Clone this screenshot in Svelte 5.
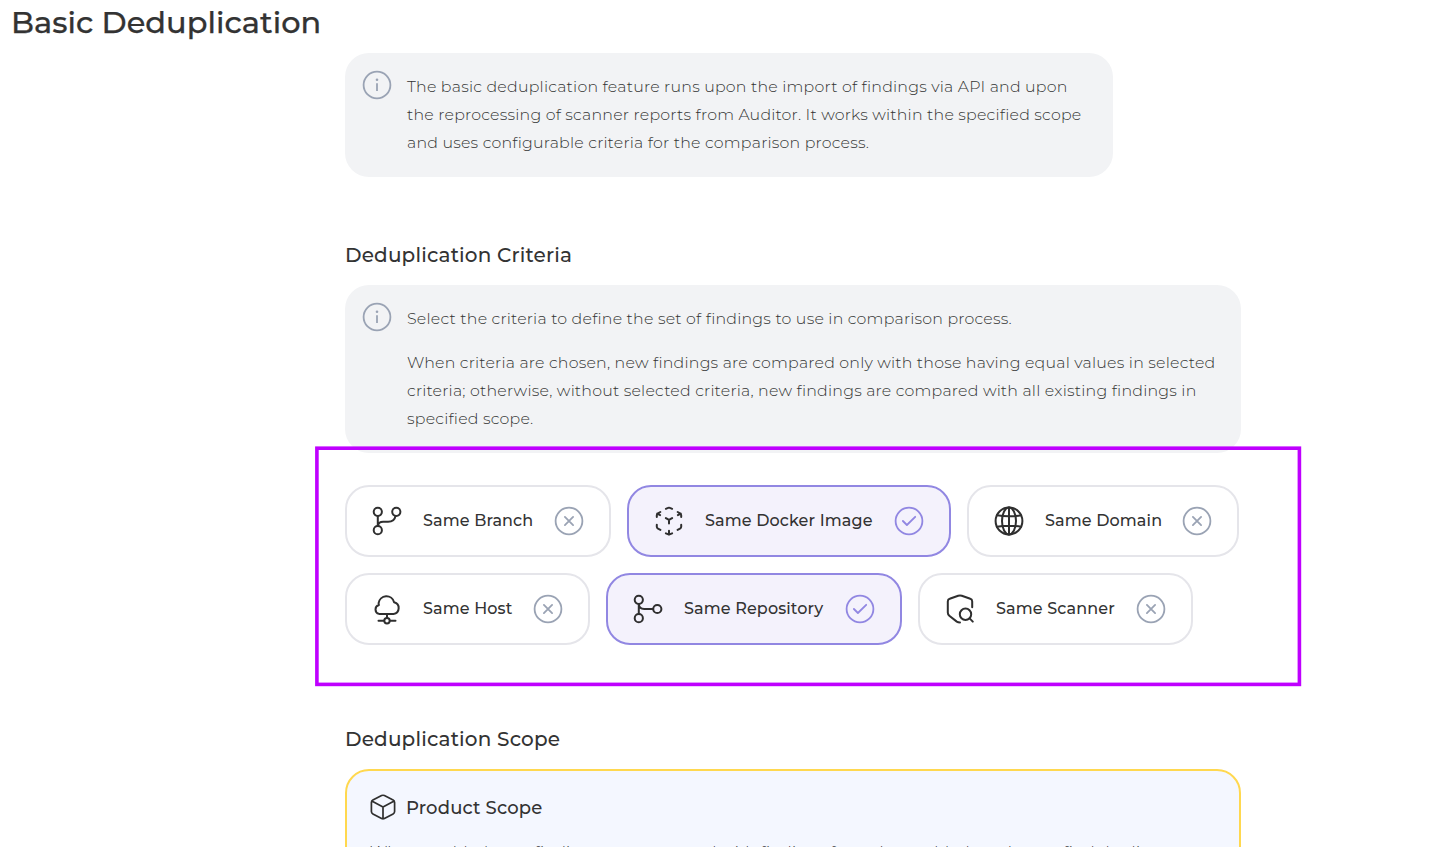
<script>
  const intro = [
    'The basic deduplication feature runs upon the import of findings via API and upon the reprocessing of scanner reports from Auditor. It works within the specified scope and uses configurable criteria for the comparison process.',
  ];

  const criteriaHelp = [
    'Select the criteria to define the set of findings to use in comparison process.',
    'When criteria are chosen, new findings are compared only with those having equal values in selected criteria; otherwise, without selected criteria, new findings are compared with all existing findings in specified scope.',
  ];

  const rows = [
    [
      { label: 'Same Branch', icon: 'branch', width: 266, on: false },
      { label: 'Same Docker Image', icon: 'docker', width: 324, on: true },
      { label: 'Same Domain', icon: 'globe', width: 272, on: false },
    ],
    [
      { label: 'Same Host', icon: 'cloud', width: 245, on: false },
      { label: 'Same Repository', icon: 'repo', width: 296, on: true },
      { label: 'Same Scanner', icon: 'scanner', width: 275, on: false },
    ],
  ];
</script>

{#snippet note(paragraphs, narrow)}
  <section class="note" class:narrow>
    <svg class="info" viewBox="0 0 32 32" width="32" height="32">
      <circle cx="16" cy="16" r="13.4" />
      <path d="M16 14.2v7.8" />
      <circle class="dot" cx="16" cy="10.7" r="1.3" />
    </svg>
    <div class="copy">
      {#each paragraphs as paragraph}
        <p>{paragraph}</p>
      {/each}
    </div>
  </section>
{/snippet}

{#snippet icon(name)}
  <svg class="icon" viewBox="0 0 32 32" width="32" height="32">
    {#if name === 'branch'}
      <circle cx="6.8" cy="6.8" r="4.1" />
      <circle cx="25.3" cy="6.8" r="4.1" />
      <circle cx="6.8" cy="25.2" r="4.1" />
      <path d="M6.8 10.9v10.2c.4-2.8 2.4-4.3 5.4-4.3h4.9c4 0 6.8-2.2 7.4-5.9" />
    {:else if name === 'docker'}
      <path d="M12.9 3.8 15 2.9q1-.5 2 0L19.1 3.8M7.3 7 5 8.3Q3.8 9 3.8 10.2V11.9M4.2 8.6l2.9 1.5M24.7 7 27 8.3q1.2.7 1.2 1.9v1.7M27.8 8.6l-2.9 1.5M3.8 19.8v2q0 1.2 1.2 1.9l2.4 1.2M28.2 19.8v2q0 1.200-1.200 1.900l-2.400 1.200M12.900 28.400 16 29.700l3.100-1.300M16 25.700v3.800M12.900 13.100 16 14.900l3.100-1.800M16 14.900v3.600" />
    {:else if name === 'globe'}
      <circle cx="16" cy="16" r="13.4" />
      <ellipse cx="16" cy="16" rx="7" ry="13.4" />
      <path d="M16 2.6v26.8M3.9 10.2Q16 12.4 28.1 10.2M3.9 21.8Q16 19.6 28.1 21.8" />
    {:else if name === 'cloud'}
      <path d="M8 20.9H22.5a5.900 5.900 0 0 0 .6-11.600A7.900 7.900 0 0 0 7.600 10.200 8 8 0 0 0 7.900 12 4.600 4.600 0 0 0 8 20.900Z" />
      <path d="M16 20.9v4.1M7.5 27.8h5.500M19 27.8h5.500" />
      <circle cx="16" cy="27.8" r="2.7" />
    {:else if name === 'repo'}
      <circle cx="6.8" cy="6.8" r="4.1" />
      <circle cx="6.8" cy="25.2" r="4.1" />
      <circle cx="25.3" cy="16" r="4.1" />
      <path d="M6.8 10.9v10.2M6.8 11c.2 3.4 2.2 5 5.4 5h9" />
    {:else}
      <path d="M28.2 14.2V8.4q0-2-1.9-2.6l-8.5-3q-1.8-.6-3.6 0l-8.5 3Q3.8 6.4 3.8 8.4V19.5q0 2 1.5 3.2l7.5 5.9q1.3.9 3.2.9" />
      <circle cx="21.5" cy="21.3" r="5.7" />
      <path d="m25.6 25.4 3.2 3.2" />
    {/if}
  </svg>
{/snippet}

<main>
  <h1>Basic Deduplication</h1>

  <div class="content">
    {@render note(intro, true)}

    <h2 class="criteria-title">Deduplication Criteria</h2>
    {@render note(criteriaHelp, false)}

    <div class="criteria">
      {#each rows as row}
        <div class="row">
          {#each row as chip}
            <button class="chip" class:on={chip.on} style="width: {chip.width}px">
              {@render icon(chip.icon)}
              <span class="label">{chip.label}</span>
              <svg class="state" viewBox="0 0 32 32" width="32" height="32">
                <circle cx="16" cy="16" r="13.4" />
                {#if chip.on}
                  <path d="m9.9 16 4 4 8.3-8.2" />
                {:else}
                  <path d="m11.9 11.9 8.2 8.2M20.1 11.9l-8.2 8.2" />
                {/if}
              </svg>
            </button>
          {/each}
        </div>
      {/each}
      <svg class="frame" viewBox="0 0 988 242" width="988" height="242">
        <rect x="1.9" y="2.2" width="982.5" height="236.2" />
      </svg>
    </div>

    <h2 class="scope-title">Deduplication Scope</h2>
    <section class="scope">
      <h3>
        <svg class="cube" viewBox="0 0 26 26" width="26" height="26">
          <path d="M11.6 1.6q1.4-.7 2.8 0l8.7 4.5q1.5.8 1.5 2.4v9q0 1.6-1.5 2.4l-8.7 4.5q-1.4.7-2.8 0l-8.7-4.5q-1.5-.8-1.5-2.4v-9q0-1.6 1.5-2.4ZM1.8 7 13 13l11.2-6M13 13v11.8" />
        </svg>
        <span>Product Scope</span>
      </h3>
      <p>When enabled, new findings are compared with findings from the enabled product to find duplicates</p>
    </section>
  </div>
</main>

<style>
  :global(body) {
    overflow: hidden;
    background: #fff;
  }

  main {
    box-sizing: border-box;
    height: 847px;
    overflow: hidden;
    color: #333;
    font-family: Montserrat, Inter, sans-serif;
  }

  h1, h2, h3, p {
    margin: 0;
    font-weight: 500;
  }

  h1 {
    height: 53px;
    padding-left: 11px;
    box-sizing: border-box;
    font-size: 30.4px;
    line-height: 45px;
    letter-spacing: 0.03px;
    -webkit-text-stroke: 0.25px #333;
  }

  .content {
    width: 896px;
    margin-left: 345px;
  }

  .note {
    display: flex;
    gap: 14px;
    box-sizing: border-box;
    padding: 16px;
    border-radius: 24px;
    background: #f2f3f5;
  }

  .narrow {
    width: 768px;
  }

  .info {
    flex: none;
    fill: none;
    stroke: #9aa3b4;
    stroke-width: 1.8;
  }

  .info .dot {
    fill: #9aa3b4;
    stroke: none;
  }

  .copy {
    display: flex;
    flex: 1;
    flex-direction: column;
    gap: 16px;
    padding: 4px 0;
  }

  .narrow .copy {
    padding-right: 8px;
  }

  p {
    font-size: 15.8px;
    font-weight: 300;
    line-height: 28px;
    letter-spacing: 0.213px;
  }

  h2 {
    font-size: 20px;
    line-height: 28px;
    letter-spacing: 0.17px;
  }

  .criteria-title {
    margin: 64px 0 16px;
  }

  .criteria {
    position: relative;
    display: flex;
    flex-direction: column;
    gap: 16px;
    margin-top: 32px;
  }

  .row {
    display: flex;
    gap: 16px;
  }

  .chip {
    display: flex;
    align-items: center;
    flex: none;
    box-sizing: border-box;
    height: 72px;
    padding: 0 24px;
    border: 2px solid #e5e5ea;
    border-radius: 24px;
    background: #fff;
    color: #333;
    font: 500 16px Montserrat, Inter, sans-serif;
    letter-spacing: 0.13px;
  }

  .chip.on {
    border-color: #9187e2;
    background: #f4f2fc;
  }

  .label {
    flex: 1;
    padding-left: 20px;
    line-height: 24px;
    text-align: left;
    white-space: nowrap;
  }

  .icon, .cube {
    flex: none;
    fill: none;
    stroke: #2f2f2f;
    stroke-width: 2;
    stroke-linecap: round;
    stroke-linejoin: round;
  }

  .state {
    flex: none;
    fill: none;
    stroke: #9aa3b4;
    stroke-width: 1.8;
    stroke-linecap: round;
    stroke-linejoin: round;
  }

  .on .state {
    stroke: #9187e2;
  }

  .frame {
    position: absolute;
    top: -39px;
    left: -30px;
    fill: none;
    stroke: #bf00ff;
    stroke-width: 3.6;
    pointer-events: none;
  }

  .scope-title {
    margin: 80px 0 16px;
  }

  .scope {
    box-sizing: border-box;
    height: 180px;
    padding: 23px;
    border: 2px solid #ffd84f;
    border-radius: 24px;
    background: #f4f7ff;
  }

  h3 {
    display: flex;
    align-items: center;
    gap: 10px;
    height: 26px;
    font-size: 18px;
    letter-spacing: 0.15px;
  }

  h3 span {
    padding-top: 2px;
  }

  .cube {
    stroke-width: 1.7;
  }

  .scope p {
    margin-top: 18px;
    white-space: nowrap;
  }
</style>
